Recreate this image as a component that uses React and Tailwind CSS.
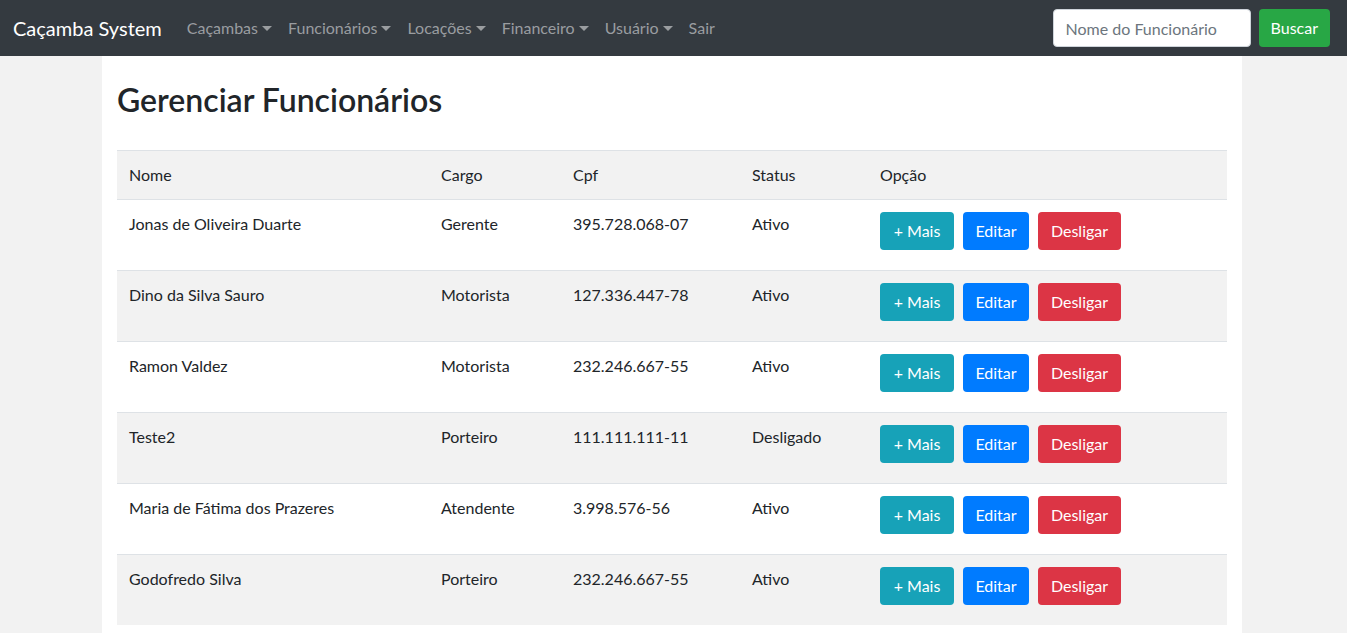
import React from "react";

const rows = [
  ["Jonas de Oliveira Duarte", "Gerente", "395.728.068-07", "Ativo"],
  ["Dino da Silva Sauro", "Motorista", "127.336.447-78", "Ativo"],
  ["Ramon Valdez", "Motorista", "232.246.667-55", "Ativo"],
  ["Teste2", "Porteiro", "111.111.111-11", "Desligado"],
  ["Maria de Fátima dos Prazeres", "Atendente", "3.998.576-56", "Ativo"],
  ["Godofredo Silva", "Porteiro", "232.246.667-55", "Ativo"],
];

function Caret() {
  return (
    <span className="ml-[4px] inline-block align-[3px] w-0 h-0 border-l-[5px] border-r-[5px] border-t-[5px] border-l-transparent border-r-transparent border-t-current" />
  );
}

function NavItem({ label, caret = true }) {
  return (
    <a className="px-2 py-2 text-[16px] leading-6 text-[#9a9da0] flex items-center cursor-pointer">
      {label}
      {caret && <Caret />}
    </a>
  );
}

export default function App() {
  return (
    <div
      className="min-h-screen bg-[#f2f2f2] text-[#212529]"
      style={{ fontFamily: '"Segoe UI", Lato, "Liberation Sans", sans-serif' }}
    >
      <nav className="h-[56px] bg-[#343a40] flex items-center justify-between pl-[13px] pr-[17px]">
        <div className="flex items-center">
          <span className="text-[20px] leading-[30px] text-white mr-[17px]">Caçamba System</span>
          <div className="flex items-center">
            <NavItem label="Caçambas" />
            <NavItem label="Funcionários" />
            <NavItem label="Locações" />
            <NavItem label="Financeiro" />
            <NavItem label="Usuário" />
            <NavItem label="Sair" caret={false} />
          </div>
        </div>
        <div className="flex items-center gap-2">
          <input
            className="w-[198px] h-[38px] rounded-[4px] bg-white border border-[#ced4da] px-3 text-[16px] text-[#495057] placeholder:text-[#6c757d] outline-none"
            placeholder="Nome do Funcionário"
          />
          <button className="h-[38px] px-3 rounded-[4px] bg-[#28a745] text-white text-[16px]">Buscar</button>
        </div>
      </nav>
      <div className="pr-[3px]">
        <div className="w-[1140px] mx-auto bg-white px-[15px] pb-2">
          <h2 className="pt-[25px] pb-[31px] text-[32px] leading-[38px] font-semibold">Gerenciar Funcionários</h2>
          <table className="w-full table-fixed border-collapse text-[16px] leading-6">
            <thead>
              <tr className="bg-[#f2f2f2] border-t border-b border-[#dee2e6]">
                <th className="w-[312px] text-left font-normal p-3">Nome</th>
                <th className="w-[132px] text-left font-normal p-3">Cargo</th>
                <th className="w-[179px] text-left font-normal p-3">Cpf</th>
                <th className="w-[128px] text-left font-normal p-3">Status</th>
                <th className="text-left font-normal p-3">Opção</th>
              </tr>
            </thead>
            <tbody>
              {rows.map((r, i) => (
                <tr key={i} className={`border-t border-[#dee2e6] ${i % 2 === 1 ? "bg-[#f2f2f2]" : "bg-white"}`}>
                  <td className="p-3 align-top">{r[0]}</td>
                  <td className="p-3 align-top">{r[1]}</td>
                  <td className="p-3 align-top">{r[2]}</td>
                  <td className="p-3 align-top">{r[3]}</td>
                  <td className="p-3 align-top">
                    <div className="flex gap-[9px] mb-2">
                      <button className="h-[38px] w-[74px] rounded-[4px] bg-[#17a2b8] text-white">+ Mais</button>
                      <button className="h-[38px] w-[66px] rounded-[4px] bg-[#007bff] text-white">Editar</button>
                      <button className="h-[38px] w-[83px] rounded-[4px] bg-[#dc3545] text-white">Desligar</button>
                    </div>
                  </td>
                </tr>
              ))}
            </tbody>
          </table>
        </div>
      </div>
    </div>
  );
}
